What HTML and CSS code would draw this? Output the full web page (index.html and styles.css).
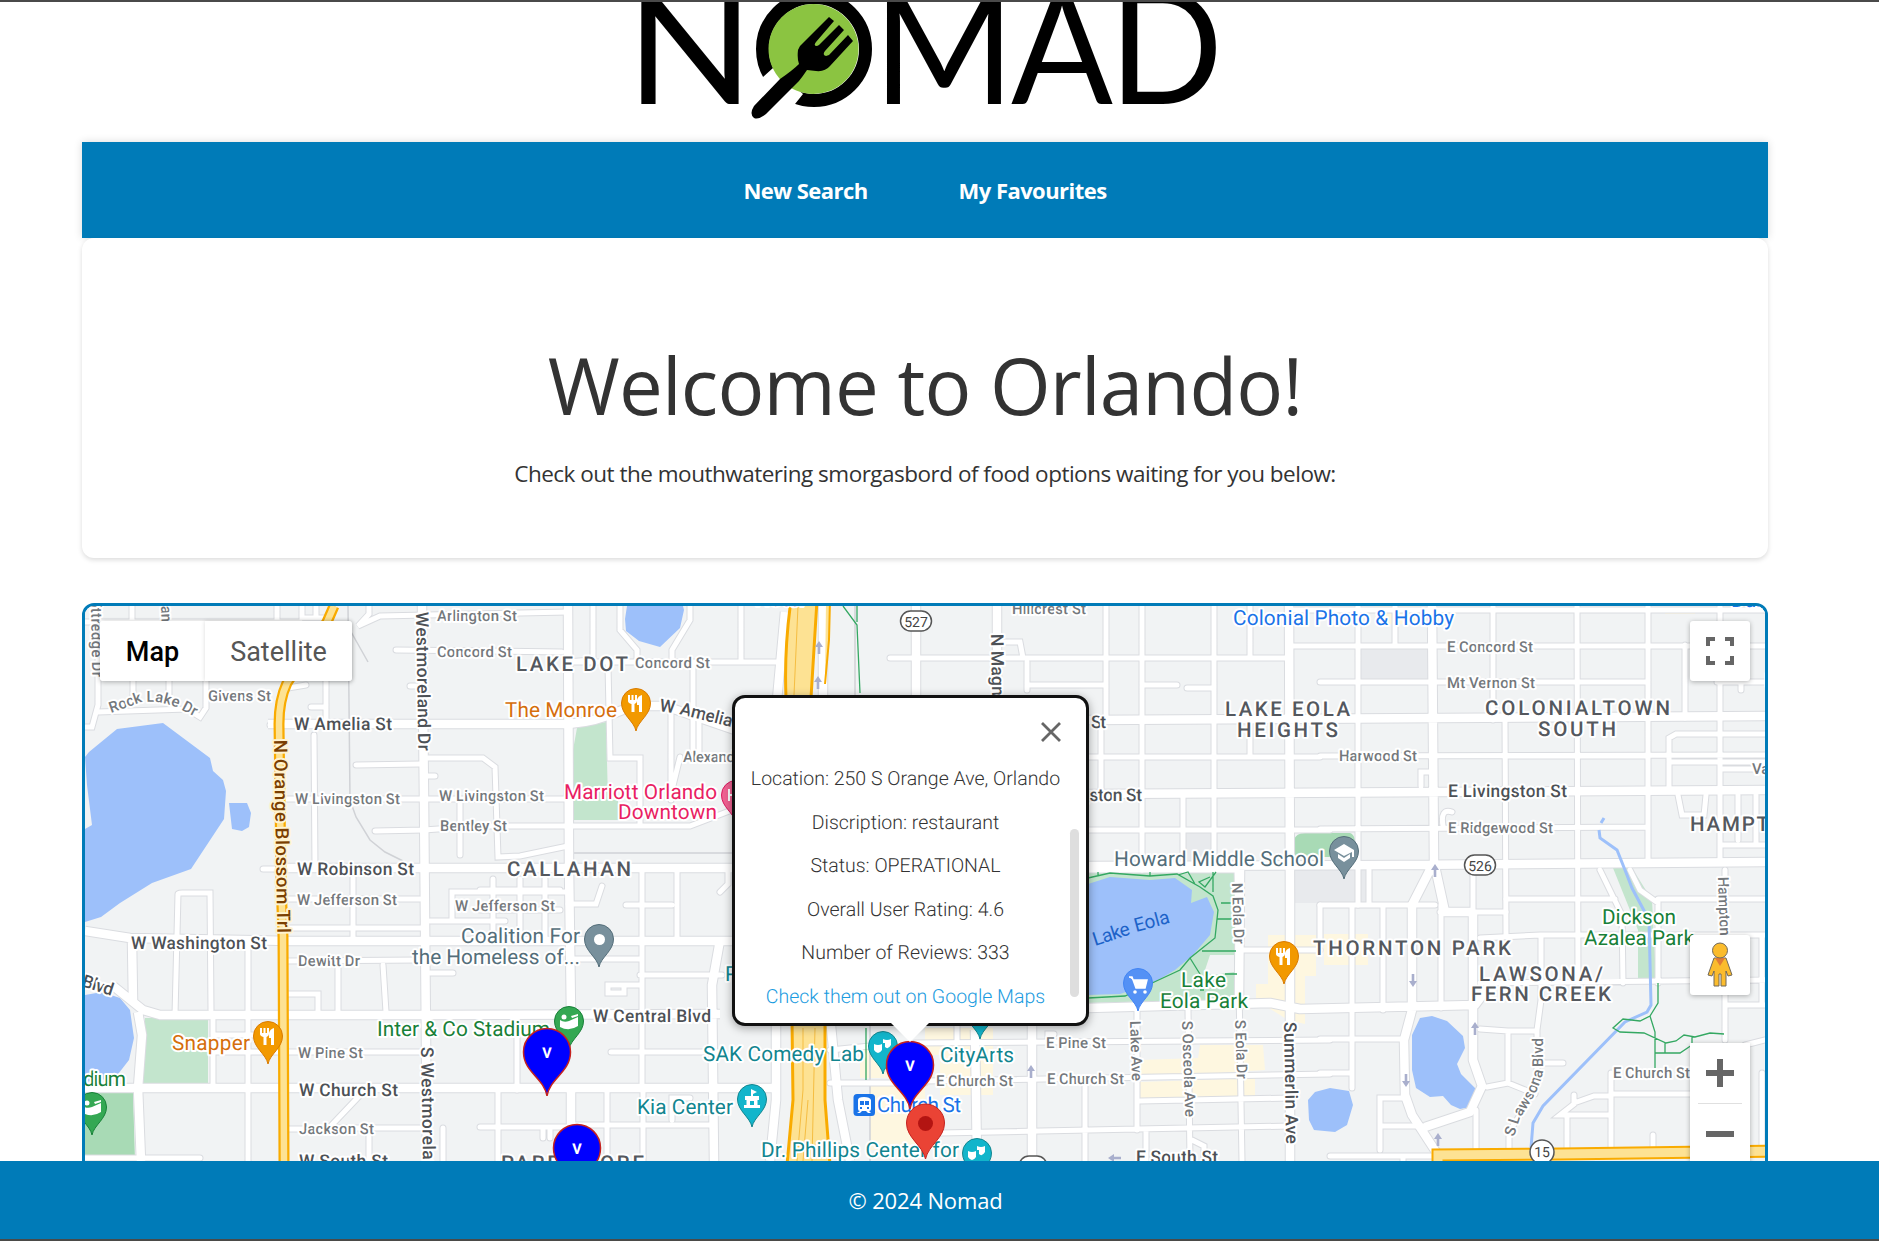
FILE: index.html
```html
<!DOCTYPE html>
<html lang="en">
<head>
<meta charset="utf-8">
<title>Nomad</title>
<link rel="stylesheet" href="styles.css">
</head>
<body>
<div class="page">
<header class="brand">
  <svg class="logo" viewBox="630 2 600 120" width="600" height="120" role="img" aria-label="Nomad">
    <g class="logo-text">
      <text x="626" y="104" textLength="128" lengthAdjust="spacingAndGlyphs">N</text>
      <text x="873" y="104" textLength="142" lengthAdjust="spacingAndGlyphs">M</text>
      <text x="1011" y="104" textLength="102" lengthAdjust="spacingAndGlyphs">A</text>
      <text x="1109" y="104" textLength="114" lengthAdjust="spacingAndGlyphs">D</text>
    </g>
    <circle cx="814" cy="49" r="51.5" fill="none" stroke="#000" stroke-width="13"/>
    <path fill="#fff" d="M763 77 773 68 803 94 795 104 780 125 745 95Z"/>
    <circle cx="813.5" cy="49" r="45" fill="#8bc441"/>
    <path d="M829 17 834 21 816 42Q813 46 817 46L819 45 839 25 844 30 825 51Q822 55 826 56L829 55 848 35 853 41 830 66Q825 72 816 71L807 70Q803 76 799 81L766 114Q759 120 754 118 749 114 754 106L780 79Q793 70 799 64 797 59 798 50 799 46 803 43Z"/>
  </svg>
</header>
<nav class="nav"><a>New Search</a><a>My Favourites</a></nav>
<section class="hero">
  <h1>Welcome to Orlando!</h1>
  <p>Check out the mouthwatering smorgasbord of food options waiting for you below:</p>
</section>
<main class="map">
<svg class="tiles" viewBox="85 606 1680 632" width="1680" height="632">
  <defs>
    <g id="minor">
      <path d="M85 622H300M98 606V705L92 727H85M132 606V622M133 680V700M169 680V697M206 680V708L200 717 187 709 98 712M277 606V622M302 606V618H328M316 606V618M369 606V614L358 626 380 616 568 612M396 650 562 652M410 686H422M311 707H326M326 680V722M288 688 306 685M270 725H285M314 735 315 868M356 765 420 764M428 758 483 758 495 767 498 857 520 856 568 846M426 776H435M285 799H568M460 800V855M375 831 424 830 480 826 568 826M263 869H285"/>
      <path d="M285 899H420M286 928H424M353 870V941M175 1015 178 894Q178 893 182 893H210L211 1010M248 941V1016M213 1020V1088M248 1016V1161M213 1035H285M213 1052H420M288 961 420 960M338 965V1012M383 965 386 1012M287 994H318V1014M430 921H505M452 919V892H568M430 973H453M288 1129H328L365 1090M330 1128H424M369 1130V1161M443 1128V1161M85 1158H200M493 879V940M520 879V940M545 879V940M480 890H560M480 910H560"/>
      <path d="M593 606V660L565 662M620 606V630L637 650V662M690 606V620L672 650V665M741 606V660M565 662H780M608 665 610 758H640V824M693 665V750M671 712V800M699 722V758H732M640 790V826M680 757 672 790M568 826H690L732 810M568 868H732M642 870V1083M677 870V942M568 904H596L602 886M626 905H672M728 870V884L720 892M570 959H640M640 975H722M640 985H608V993H624V985M611 1052H720M517 1017V1090M570 1125H712M498 1090V1161M607 1090V1161M643 1090V1161M672 1120V1098H690M543 1130V1138M550 1130V1138M480 1127H570"/>
      <path d="M890 658H1290M1106 606V720M1142 606V870M1214 606V870M1250 606V658M1250 720V757M1101 720V790M1088 757H1320M1088 830H1330M1027 662V690M1027 685H1106M1002 642H1020L1023 658M1142 685H1177M1187 688H1214M1183 795V865M1358 606V905M1395 606V645M1493 606V720M1577 606 1578 983M1648 606V863M1720 606V863M1505 720 1506 935M1685 645V718M1290 610H1765M1290 646H1765M1320 682H1648M1717 682H1765M1320 756 1765 755M1320 829 1648 827M1505 756H1648M1669 790V738L1676 734H1765M1669 762H1765M1720 769H1765M1678 795 1682 815H1704L1706 795M1738 795V840M1756 795V845M1720 845H1765M1421 786V772H1430M1443 826Q1440 808 1452 812M1741 682V690"/>
      <path d="M1320 905H1435M1440 912H1506M1506 899H1615M1658 899H1765M1480 938 1540 935 1765 935M1480 983 1765 980M1320 1039H1403M1320 1073H1352V1088M1405 1098H1380V1150M1380 1126H1425M1330 1156H1435M1352 905V1073M1383 905V1010M1369 870V905M1441 905V1008M1473 870V912M1600 870 1622 915 1623 983M1630 870 1640 890 1658 903V983M1725 870V1040M1725 1005H1765M1762 935V1005M1745 1045 1765 1040M1541 935V1000L1537 1030V1080L1520 1115 1509 1132V1150M1480 1029 1508 1031H1537M1508 1031V1083L1535 1094M1487 1087 1508 1083M1540 1063H1563M1611 1073V1150M1611 1094H1690M1574 1095V1104L1560 1115H1611M1574 1103 1594 1096H1611M1567 1115V1150M1653 1135V1150M1476 1110V1150M1762 1073V1150M1403 1158V1161"/>
      <path d="M915 1043 1330 1040M925 1081 1330 1074M1140 1101 1290 1098M940 1133 1290 1126M1137 1010V1130M1188 1010 1190 1161M1237 870 1242 1161M1085 1085V1161M957 1026V1040M1048 1040V1034H1054M830 1050 890 1044M830 1083H925M1146 1132V1161M1320 950H1240M1320 905V940M1192 1140 1204 1146V1158M1088 870H1237"/>
    </g>
    <g id="major">
      <path d="M268 724 560 724Q585 724 607 716L633 706H665L735 730M422 606 424 800 427 1161M285 868H732M85 931 130 938 290 941H732M112 985 143 1010 160 1015H426L720 1014M85 1088 780 1088M138 1012 142 1035 138 1088 141 1161M132 941 133 1000M568 606 569 868 571 1014M571 1088V1161M720 940 712 985 714 1161M785 612 777 700M776 1026V1100L770 1161M823 606V695M831 1026 838 1100 850 1161"/>
      <path d="M916 606V695M997 606V695M1032 1026V1161M975 1030 977 1161M1088 720 1765 716M1088 794 1765 790M1088 866 1400 865 1765 862M1289 606 1290 900V1161M1432 606 1434 862 1412 905V1010L1404 1040 1405 1095 1412 1115 1438 1155M1434 862 1445 912H1473M1473 912V1060L1482 1086 1470 1112 1425 1127M1088 1008 1270 1003 1300 1009 1475 1005 1490 985M1240 870 1239 1003"/>
    </g>
    <path id="trail" d="M334 606 327 622 287 683Q279 700 279 724L281 880 283 937 284 1161"/>
    <path id="highway" d="M1438 1175V1155L1560 1154 1775 1151"/>
    <path id="pin" d="M0 28C-2 18-14.5 12-14.5 0A14.5 14.5 0 1 1 14.5 0C14.5 12 2 18 0 28Z"/>
    <path id="rock-lake" d="M111 713 139 703Q160 699 180 709L197 718"/>
    <path id="lawsona" d="M1514 1137 1520 1118Q1540 1090 1543 1072V1040"/>
    <g id="fork" fill="#fff"><path d="M-8-8h2v5h1.500v-5h2v5H-1v-5h2v6q0 2-2.500 3V9h-3V1Q-8 0-8-2ZM6-8V9H3V2H1V-3Q2-7 6-8Z"/></g>
    <g id="masks" fill="#fff"><path d="M-9-2q4 2 8 0v6q-4 6-8 0Z"/><path d="M0-7q4 2 8 0V-1q-3 5-6 2V-3H0Z"/></g>
    <g id="stadium" fill="#fff"><path d="M-9-1q4 3 9 1l9-4V5Q0 11-9 6Z"/><circle cx="-5" cy="-4" r="2.500"/><path d="M2-5 9-7v2L3-3Z"/></g>
    <path id="arrow" d="M0-7 4-1H1.300V6H-1.300V-1H-4Z" fill="#a9afcd"/>
    <g id="visit"><path d="M0 44C-3 26-23.500 20-23.500 0A23.500 23.500 0 1 1 23.500 0C23.500 20 3 26 0 44Z" fill="#00f" stroke="#c5221f" stroke-width="1.500"/><text class="mark" y="6" text-anchor="middle">v</text></g>
  </defs>

  <rect x="85" y="606" width="1680" height="632" fill="#f1f3f4"/>
  <g fill="#e8eaed"><path d="M1361 648H1428V680H1361ZM1293 870H1366V903H1293ZM1184 831H1213V862H1184Z"/></g>
  <g fill="#c3e5cd"><path d="M145 1018H208V1084H143ZM577 728 606 722 608 800H618V820H573V750ZM1088 873H1234L1237 1003 1200 1000 1088 1003Z"/><path d="M1613 868H1632L1652 900 1656 978H1638V930Z"/></g>
  <path fill="#a8dab5" d="M85 1093H133L135 1161H85ZM1294 840Q1296 833 1305 833H1350Q1357 835 1357 857H1294Z"/>
  <path fill="#fef7e0" d="M925 1028H952V1040H925ZM957 1028H993V1095H940V1055H925V1028ZM860 1047H900V1078H860ZM870 1085H925V1150H870ZM1140 1060 1198 1058 1200 1045H1263L1265 1070 1140 1078ZM1140 1082 1255 1078V1098L1140 1100ZM1268 935H1316V976H1305V1024L1288 1020 1256 1000V984H1268ZM1324 934H1368V965H1324ZM1375 606H1420V624H1375ZM1665 611H1695V614H1665Z"/>
  <path fill="#f1f3f4" d="M1210 955H1234V972L1212 975 1205 970Z"/>
  <g fill="#9dc0fa">
    <path d="M85 757 89 752 117 729 163 723 210 758 213 771 223 780 226 791 224 819 191 869 152 883 120 903 101 917 85 922V829L92 825 87 785ZM229 803H247L251 813 249 827 242 831 232 829ZM627 606H683L684 610 680 628 660 647 639 641 626 631 625 619Z"/>
    <path d="M85 995 102 992 120 998 130 1010 134 1038 129 1060 115 1078 85 1082ZM1088 884 1110 877 1150 880 1175 878 1192 890 1191 903 1207 897 1214 912 1210 935 1193 955 1175 970 1153 983 1120 994 1088 995Z"/>
    <path d="M1308 1100 1315 1092 1330 1088 1349 1091 1353 1105 1347 1125 1335 1132 1314 1130 1309 1120ZM1420 1018 1432 1016 1447 1021 1463 1036 1465 1048 1457 1064 1461 1074 1475 1088 1476 1095 1471 1107 1460 1109 1451 1105 1443 1096 1430 1097 1416 1088 1412 1070 1412 1035Z"/>
  </g>
  <path class="rail" d="M348 606 350 800 356 817 370 840 385 852 403 861M350 630 368 662M565 853H732M855 606V695M870 1026V1161M1088 864H1765"/>
  <use href="#minor" class="case-minor"/><use href="#major" class="case-major"/>
  <use href="#minor" class="fill-minor"/><use href="#major" class="fill-major"/>

  <g fill="#fde293" stroke="#f9ab00" stroke-width="3">
    <path d="M791 600Q784 650 786 698H811L817 600Z"/>
    <path d="M792 1020 793 1100 787 1165H830L825 1100V1020Z"/>
    <path d="M826 600H830L829 640 825 684" stroke-width="2"/>
  </g>
  <path fill="none" stroke="#f5bd42" d="M798 606 794 695M803 1028V1090L797 1161M815 1028 812 1161M808 1100 803 1161"/>
  <use href="#trail" fill="none" stroke="#f9ab00" stroke-width="11"/><use href="#trail" fill="none" stroke="#fde293" stroke-width="6.500"/>
  <use href="#highway" fill="none" stroke="#f9ab00" stroke-width="13"/><use href="#highway" fill="none" stroke="#fde293" stroke-width="9"/>
  <path class="creek" d="M1604 818 1601 823M1599 830 1600 838 1617 850 1625 870 1632 888 1649 920 1651 1005 1647 1012 1625 1022 1543 1106 1533 1123 1531 1148"/>
  <path class="path" d="M843 606 857 625 860 693M857 606V622M866 1028V1080M1088 878 1110 873 1150 876 1177 874 1200 887 1213 896 1218 910 1215 938 1190 958 1180 970 1150 984 1125 996 1088 998M1098 872V876M1150 872V876M1216 872 1205 887 1199 882 1210 877M1178 875 1188 872 1195 884M1213 892 1213 872M1217 919H1232M1221 903H1232M1202 951H1236M1190 958 1208 987M1225 974H1237M1204 990H1200M1658 983V1003L1650 1016 1640 1021 1623 1019 1613 1028 1620 1032 1644 1033 1666 1043 1676 1041 1684 1035 1695 1037 1710 1033 1724 1034M1650 1016 1655 1032V1068M1655 1053H1680L1692 1045V1037M1665 1043V1053"/>
  <use href="#arrow" x="819" y="648"/><use href="#arrow" x="818" y="683"/><use href="#arrow" x="1031" y="1072"/><use href="#arrow" x="1475" y="1029"/><use href="#arrow" x="1438" y="1140"/><use href="#arrow" x="1435" y="871"/>
  <use href="#arrow" transform="translate(1413 980) rotate(180)"/><use href="#arrow" transform="translate(1406 1080) rotate(180)"/><use href="#arrow" transform="translate(1115 1158) rotate(-90)"/>

  <g class="street">
    <text x="437" y="621" textLength="80">Arlington St</text><text x="437" y="657" textLength="75">Concord St</text><text x="635" y="668" textLength="75">Concord St</text>
    <text x="208" y="701" textLength="63">Givens St</text><text><textPath href="#rock-lake">Rock Lake Dr</textPath></text>
    <text x="295" y="804" textLength="105">W Livingston St</text><text x="439" y="801" textLength="105">W Livingston St</text><text x="440" y="831" textLength="67">Bentley St</text><text x="683" y="762" textLength="52">Alexand</text>
    <text x="297" y="905" textLength="100">W Jefferson St</text><text x="455" y="911" textLength="100">W Jefferson St</text><text x="298" y="966" textLength="62">Dewitt Dr</text><text x="298" y="1058" textLength="65">W Pine St</text><text x="299" y="1134" textLength="75">Jackson St</text>
    <text x="1012" y="614" textLength="74">Hillcrest St</text><text x="1447" y="652" textLength="86">E Concord St</text><text x="1447" y="688" textLength="88">Mt Vernon St</text><text x="1339" y="761" textLength="78">Harwood St</text><text x="1448" y="833" textLength="105">E Ridgewood St</text><text x="1752" y="774">Vassar</text>
    <text x="1046" y="1048" textLength="60">E Pine St</text><text x="936" y="1086" textLength="77">E Church St</text><text x="1047" y="1084" textLength="77">E Church St</text><text x="1613" y="1078" textLength="77">E Church St</text>
    <text transform="translate(1130 1021) rotate(88)" textLength="60">Lake Ave</text><text transform="translate(1182 1021) rotate(88)" textLength="96">S Osceola Ave</text><text transform="translate(1235 1020) rotate(88)" textLength="59">S Eola Dr</text><text transform="translate(1232 883) rotate(88)" textLength="61">N Eola Dr</text>
    <text transform="translate(1718 877) rotate(88)" textLength="59">Hampton</text><text><textPath href="#lawsona">S Lawsona Blvd</textPath></text>
    <text transform="translate(91 604) rotate(89)" textLength="73">ittredge Dr</text><text transform="translate(161 606) rotate(88)" textLength="16">an</text>
  </g>
  <g class="avenue">
    <text x="294" y="730" textLength="98">W Amelia St</text><text x="297" y="875" textLength="117">W Robinson St</text><text x="131" y="949" textLength="136">W Washington St</text><text x="593" y="1022" textLength="118">W Central Blvd</text><text x="299" y="1096" textLength="99">W Church St</text><text x="299" y="1167" textLength="89">W South St</text>
    <text x="1091" y="728" textLength="15">St</text><text x="1080" y="801" textLength="62">gston St</text><text x="1448" y="797" textLength="119">E Livingston St</text><text x="1136" y="1163" textLength="82">E South St</text><text x="1765" y="686">E</text>
    <text transform="translate(659 711) rotate(8)" textLength="16">W</text><text transform="translate(679 714) rotate(14)" textLength="74">Amelia St</text>
    <text transform="translate(416 612) rotate(89)" textLength="139">Westmoreland Dr</text><text transform="translate(421 1047) rotate(89)" textLength="133">S Westmoreland</text>
    <text transform="translate(991 634) rotate(89)" textLength="72">N Magno</text><text transform="translate(1284 1022) rotate(89)" textLength="122">Summerlin Ave</text><text transform="translate(81 986) rotate(18)" textLength="32">Blvd</text>
    <text class="trail-name" transform="translate(274 740) rotate(89)" textLength="193">N Orange Blossom Trl</text>
  </g>
  <g class="area">
    <text x="516" y="671" textLength="112">LAKE DOT</text><text x="507" y="876" textLength="124">CALLAHAN</text><text x="501" y="1170" textLength="143">PARRAMORE</text>
    <text x="1225" y="716" textLength="125">LAKE EOLA</text><text x="1237" y="737" textLength="101">HEIGHTS</text><text x="1485" y="715" textLength="185">COLONIALTOWN</text><text x="1538" y="736" textLength="78">SOUTH</text><text x="1690" y="831" textLength="111">HAMPTON</text>
    <text x="1313" y="955" textLength="198">THORNTON PARK</text><text x="1479" y="981" textLength="124">LAWSONA/</text><text x="1471" y="1001" textLength="140">FERN CREEK</text>
  </g>
  <g class="place">
    <g fill="#d56e0c"><text x="505" y="717" textLength="112">The Monroe</text><text x="172" y="1050" textLength="78">Snapper</text></g>
    <g fill="#e91e63"><text x="564" y="799" textLength="153">Marriott Orlando</text><text x="618" y="819" textLength="99">Downtown</text><text x="755" y="606">Hotel</text></g>
    <g fill="#546e7a"><text x="461" y="943" textLength="119">Coalition For</text><text x="412" y="964" textLength="168">the Homeless of...</text><text x="1114" y="866" textLength="210">Howard Middle School</text></g>
    <g fill="#188038"><text x="377" y="1036" textLength="173">Inter &amp; Co Stadium</text><text x="83" y="1086" textLength="43">dium</text><text x="1181" y="987" textLength="45">Lake</text><text x="1160" y="1008" textLength="88">Eola Park</text><text x="1602" y="924" textLength="74">Dickson</text><text x="1584" y="945" textLength="110">Azalea Park</text></g>
    <g fill="#12858f"><text x="703" y="1061" textLength="161">SAK Comedy Lab</text><text x="940" y="1062" textLength="74">CityArts</text><text x="637" y="1114" textLength="96">Kia Center</text><text x="761" y="1157" textLength="198">Dr. Phillips Center for</text><text x="725" y="981">P</text></g>
    <g fill="#1a73e8"><text x="1233" y="625" textLength="221">Colonial Photo &amp; Hobby</text><text x="877" y="1112" textLength="84">Church St</text><text x="1731" y="607">Dunkin</text></g>
    <g class="water"><text transform="translate(1095 946) rotate(-18)" textLength="38">Lake</text><text transform="translate(1136 932) rotate(-15)" textLength="36">Eola</text></g>
  </g>
  <g class="shield"><rect x="900.500" y="611" width="31" height="20" rx="10"/><text x="916" y="626.500">527</text><rect x="1464.500" y="855" width="31" height="20" rx="10"/><text x="1480" y="870.500">526</text><circle cx="1542" cy="1152" r="12"/><text x="1542" y="1157">15</text><rect x="1019" y="1156" width="28" height="20" rx="10"/></g>

  <g fill="#f29900" stroke="#d97b00"><use href="#pin" x="636" y="703"/><use href="#pin" x="268" y="1036"/><use href="#pin" x="1284" y="956"/></g>
  <use href="#fork" x="636" y="703"/><use href="#fork" x="268" y="1036"/><use href="#fork" x="1284" y="956"/>
  <g fill="#34a853" stroke="#188038"><use href="#pin" x="569" y="1021"/><use href="#pin" x="92" y="1107"/></g><use href="#stadium" x="569" y="1021"/><use href="#stadium" x="92" y="1107"/>
  <g fill="#78909c" stroke="#546e7a"><use href="#pin" x="599" y="939"/><use href="#pin" x="1344" y="851"/></g><circle cx="599.500" cy="939.500" r="5.500" fill="#fff"/><path fill="#fff" d="M1334 850 1344 844 1354 850V857H1352V852L1344 856ZM1338 854 1344 858 1350 854V858L1344 862 1338 858Z"/>
  <g fill="#12b5cb" stroke="#12858f"><use href="#pin" x="752" y="1099"/><use href="#pin" x="883" y="1046"/><use href="#pin" x="980" y="1011"/><use href="#pin" x="977" y="1153"/></g><use href="#masks" x="883" y="1046"/><use href="#masks" x="977" y="1153"/>
  <path fill="#fff" fill-rule="evenodd" d="M751 1089 757 1092 753 1094V1096H759V1100H757.500V1105H760V1108H744V1105H746.500V1100H745V1096H751ZM750 1101V1105H754V1101Z"/>
  <g fill="#f06292" stroke="#d81b60"><use href="#pin" x="736" y="795"/></g><path d="M729 789v12M729 795h10" stroke="#fff" stroke-width="2"/>
  <g fill="#5491f5" stroke="#4285f4"><use href="#pin" x="1138" y="983"/></g><path d="M1129 977H1132L1136 988H1145L1147 980H1133" fill="#fff" stroke="#fff" stroke-width="1.500"/><circle cx="1135" cy="992" r="1.800" fill="#fff"/><circle cx="1145" cy="992" r="1.800" fill="#fff"/>
  <rect x="853.500" y="1094" width="21.500" height="22" rx="3.500" fill="#1a73e8"/><path fill="#fff" fill-rule="evenodd" d="M858 1100Q858 1097 864 1097T871 1100V1109Q871 1111 869 1111L871 1113H868L866 1111H862L860 1113H857L860 1111Q858 1111 858 1109ZM860 1101V1105H864V1101ZM865 1101V1105H869V1101ZM860 1107V1109H862V1107ZM867 1107V1109H869V1107Z"/>

  <use href="#visit" x="547" y="1052"/><use href="#visit" x="577" y="1148"/><use href="#visit" x="910" y="1065"/>
  <path d="M925.500 1159C922.500 1145 906.500 1138 906.500 1123A19 19 0 1 1 944.500 1123C944.500 1138 928.500 1145 925.500 1159Z" fill="#ea4335" stroke="#c5221f"/><circle cx="925.500" cy="1123.500" r="7.500" fill="#b31412"/>
</svg>

<div class="map-type"><button class="active">Map</button><button>Satellite</button></div>
<button class="tool fullscreen" aria-label="Fullscreen"><svg width="28" height="28" viewBox="0 0 28 28"><path d="M2 9V2H9M19 2H26V9M26 19V26H19M9 26H2V19" fill="none" stroke="#666" stroke-width="4"/></svg></button>
<button class="tool pegman" aria-label="Street View"><svg width="26" height="46" viewBox="0 0 26 46"><path d="M7 16H19L25 33 21 34 19 29V44H14V32H12V44H7V29L5 34 1 33Z" fill="#fbbc2d" stroke="#71695a"/><path d="M8 16H18L13 24Z" fill="#e27c36"/><circle cx="13" cy="8.500" r="7.500" fill="#fbbc2d" stroke="#71695a"/></svg></button>
<div class="zoom"><button aria-label="Zoom in"><svg width="28" height="28" viewBox="0 0 28 28"><path d="M0 14H28M14 0V28" stroke="#666" stroke-width="6"/></svg></button><i></i><button aria-label="Zoom out"><svg width="28" height="28" viewBox="0 0 28 28"><path d="M0 14H28" stroke="#666" stroke-width="6"/></svg></button></div>
<aside class="info">
  <svg class="close" width="22" height="22" viewBox="0 0 22 22"><path d="M2 2 20 20M20 2 2 20" fill="none" stroke="#666" stroke-width="2.800"/></svg>
  <p>Location: 250 S Orange Ave, Orlando</p><p>Discription: restaurant</p><p>Status: OPERATIONAL</p><p>Overall User Rating: 4.6</p><p>Number of Reviews: 333</p><p><a>Check them out on Google Maps</a></p>
  <span class="thumb"></span>
  <svg class="tail" width="38" height="20" viewBox="0 0 38 20"><path d="M0 0H38L19 19Z" fill="#fff"/></svg>
</aside>
</main>
<footer class="footer">© 2024 Nomad</footer>
</div>
</body>
</html>
```
FILE: styles.css
```css
* { box-sizing: border-box; }
body { margin: 0; background: #fff; color: #333; font-family: "Open Sans", "Noto Sans", sans-serif; overflow: hidden; }
.page { width: 1879px; height: 1241px; display: flex; flex-direction: column; padding-left: 82px; border-top: 2px solid #4a4a4a; }
.brand { height: 140px; flex: none; padding-left: 548px; }
.logo { display: block; }
.logo-text { font: 400 157px Lato, sans-serif; }
.nav { width: 1686px; height: 96px; flex: none; display: flex; justify-content: center; align-items: center; gap: 91px; background: #007bb8; box-shadow: 0 0 8px rgba(0,0,0,.15); color: #fff; font-size: 22px; font-weight: 700; letter-spacing: -.55px; }
.hero { width: 1686px; height: 320px; flex: none; background: #fff; position: relative; border-radius: 12px; box-shadow: 0 2px 5px rgba(0,0,0,.14); text-align: center; padding-top: 92px; }
.hero h1 { margin: 0; font-size: 78px; line-height: 110px; font-weight: 400; letter-spacing: -.8px; }
.hero p { margin: 17px 0 0; font-size: 22.500px; line-height: 34px; letter-spacing: -.5px; }
.map { position: relative; width: 1686px; flex: 1; margin-top: 45px; border: 3px solid #007bb8; border-radius: 12px; overflow: hidden; font-family: Roboto, sans-serif; }
.tiles { display: block; text-rendering: geometricPrecision; }
.case-minor { fill: none; stroke: #dadce0; stroke-width: 7; stroke-linecap: round; }
.fill-minor { fill: none; stroke: #fff; stroke-width: 5; stroke-linecap: round; }
.case-major { fill: none; stroke: #dadce0; stroke-width: 10.500; stroke-linejoin: round; }
.fill-major { fill: none; stroke: #fff; stroke-width: 8.500; stroke-linejoin: round; }
.rail { fill: none; stroke: #d0d2d6; stroke-width: 1.500; }
.creek { fill: none; stroke: #9dc0fa; stroke-width: 3; }
.path { fill: none; stroke: #34a862; stroke-width: 1.300; }
.street text, .avenue text, .area text, .place text { paint-order: stroke; stroke: #fff; stroke-width: 4px; stroke-linejoin: round; }
.street { font-size: 15px; fill: #74787c; font-weight: 500; }
.avenue { font-size: 17.500px; fill: #4d5156; font-weight: 500; }
.avenue .trail-name { font-size: 18.500px; fill: #7b3f00; stroke: #fff3cf; }
.area { font-size: 20.500px; fill: #54585e; font-weight: 500; }
.place { font-size: 20.800px; }
.place .water text { fill: #1c62c8; stroke: none; font-size: 19px; }
.shield rect, .shield circle { fill: #fff; stroke: #555; stroke-width: 1.500; }
.shield text { font-size: 14px; fill: #444; text-anchor: middle; }
.mark { font: 500 20px Roboto, sans-serif; fill: #fff; }
button { border: 0; background: #fff; padding: 0; font-family: inherit; display: flex; align-items: center; justify-content: center; }
.map-type { position: absolute; left: 15px; top: 15px; height: 60px; display: flex; border-radius: 3px; box-shadow: 0 1px 5px rgba(0,0,0,.3); }
.map-type button { width: 147px; padding-top: 2px; font-size: 27px; color: #565656; border-radius: 0 3px 3px 0; box-shadow: 0 0 4px rgba(0,0,0,.15); }
.map-type .active { width: 105px; color: #000; font-weight: 500; font-size: 27px; border-radius: 3px 0 0 3px; box-shadow: none; }
.tool { position: absolute; right: 15px; width: 60px; height: 60px; border-radius: 3px; box-shadow: 0 1px 5px rgba(0,0,0,.3); }
.fullscreen { top: 15px; }
.pegman { top: 329px; }
.zoom { position: absolute; right: 15px; top: 437px; width: 60px; background: #fff; border-radius: 3px; box-shadow: 0 1px 5px rgba(0,0,0,.3); }
.zoom button { width: 60px; height: 60px; }
.zoom i { display: block; height: 1px; margin: 0 8px; background: #e0e0e0; }
.info { position: absolute; left: 647px; top: 89px; width: 357px; height: 331px; padding: 59px 16px 0 17px; border: 3px solid #111; border-radius: 13px; background: #fff; box-shadow: 0 2px 10px rgba(0,0,0,.35); text-align: center; color: #333; font-size: 19.500px; font-weight: 300; text-rendering: geometricPrecision; }
.info p { margin: 0 -10px; line-height: 43.600px; white-space: nowrap; padding-right: 11px; }
.info a { color: #1a9be0; }
.close { position: absolute; left: 305px; top: 23px; }
.thumb { position: absolute; right: 7px; top: 131px; width: 9px; height: 168px; border-radius: 5px; background: #dedede; }
.tail { position: absolute; left: 156px; bottom: -20px; }
.footer { position: fixed; left: 0; bottom: 0; width: 100%; height: 80px; padding: 0 28px 0 0; background: #007bb8; border-bottom: 2px solid #4a4a48; color: #fff; display: flex; align-items: center; justify-content: center; font-size: 22px; letter-spacing: -.15px; }
```
